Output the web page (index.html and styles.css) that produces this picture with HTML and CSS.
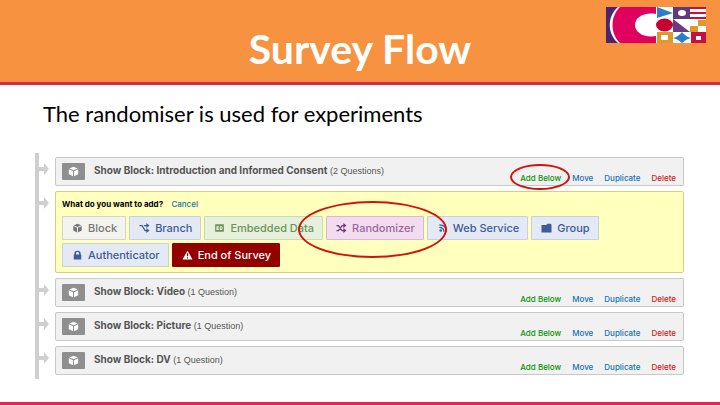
FILE: index.html
```html
<!DOCTYPE html>
<html lang="en">

<head>
    <meta charset="UTF-8">
    <meta name="viewport" content="width=device-width, initial-scale=1.0">
    <title>Survey Flow</title>
    <link rel="stylesheet" href="styles.css">
</head>

<body>
    <svg class="symbols" aria-hidden="true">
        <symbol id="cube" viewBox="0 0 16 16">
            <path d="M8 1 14 3.5 8 6.2 2 3.5Z" />
            <path d="M1.2 4.8 7.3 7.5V15L1.2 12Z" />
            <path d="M14.8 4.8 8.7 7.5V15L14.8 12Z" />
        </symbol>
        <symbol id="arrow" viewBox="0 0 10 12">
            <path d="M0 4H5V0L10 6 5 12V8H0Z" />
        </symbol>
    </svg>

    <header class="header">
        <h1>Survey Flow</h1>
        <svg class="logo" viewBox="0 0 100 36" role="img" aria-label="Logo">
            <rect width="100" height="36" fill="#fff" />
            <rect width="14" height="36" fill="#4d2470" />
            <path d="M12 0C1 9 1 27 12 36H50V0Z" fill="#fff" />
            <path d="M14 0C4 9 4 27 14 36H50V0Z" fill="#e00060" />
            <path d="M50 7C37 5 29 11 29 18S37 31 50 29Z" fill="#fff" />
            <path d="M51 0 67 6 51 11Z" fill="#2a7fc8" />
            <rect x="67" width="17" height="12" fill="#5f3a7c" />
            <ellipse cx="76" cy="6" rx="4" ry="3" fill="#fff" />
            <path d="M84 0H100V2H84ZM84 5H100V7H84ZM84 10H100V12H84Z" fill="#c8103f" />
            <ellipse cx="58.5" cy="18" rx="8.5" ry="6.5" fill="#c8002f" />
            <path d="M67 12 84 25H67Z" fill="#6b3a80" />
            <path d="M92 13H100V19H92ZM84 19H92V25H84Z" fill="#dd9a28" />
            <path d="M51 25H67V36H51ZM55 28V33H62V28Z" fill="#dd9a28" fill-rule="evenodd" />
            <path d="M67 31Q72 30 76 25 80 30 85 31 80 32 76 36 72 32 67 31Z" fill="#2a7fc8" />
            <path d="M85 25H100V36H85ZM90 29V33H95V29Z" fill="#c8103f" fill-rule="evenodd" />
        </svg>
    </header>

    <main class="content">
        <p class="intro">The randomiser is used for experiments</p>

        <ul class="flow">
            <li class="step">
                <svg class="arrow"><use href="#arrow" /></svg>
                <div class="block">
                    <span class="block-icon"><svg><use href="#cube" /></svg></span>
                    <p class="block-name"><b>Show Block: Introduction and Informed Consent</b> (2 Questions)</p>
                    <nav class="actions">
                        <a class="add marked" href="#">Add Below<span class="ring ring-small"></span></a>
                        <a class="move" href="#">Move</a>
                        <a class="duplicate" href="#">Duplicate</a>
                        <a class="delete" href="#">Delete</a>
                    </nav>
                </div>
            </li>
            <li class="step">
                <svg class="arrow"><use href="#arrow" /></svg>
                <div class="picker">
                    <p class="question"><b>What do you want to add?</b> <a href="#">Cancel</a></p>
                    <div class="options">
                        <button class="option gray" type="button">
                            <svg viewBox="0 0 16 16"><use href="#cube" /></svg>Block
                        </button>
                        <button class="option" type="button">
                            <svg viewBox="0 0 16 16"><path class="line" d="M0 4H4L9 12H13M7 4H13" /><path d="M11 0 16 4 11 8ZM11 8 16 12 11 16Z" /></svg>Branch
                        </button>
                        <button class="option green" type="button">
                            <svg viewBox="0 0 16 16"><path d="M1 2H15V14H1ZM3 5V11H7V9.5H5V8.7H7V7.3H5V6.5H7V5ZM8.5 5V11H11Q13 11 13 8T11 5ZM10.2 6.5Q11.5 6.5 11.5 8T10.2 9.5Z" fill-rule="evenodd" /></svg>Embedded Data
                        </button>
                        <button class="option pink marked" type="button">
                            <svg viewBox="0 0 16 16"><path class="line" d="M0 4H3L9 12H13M0 12H3L9 4H13" /><path d="M11 0 16 4 11 8ZM11 8 16 12 11 16Z" /></svg>Randomizer
                            <span class="ring ring-large"></span>
                        </button>
                        <button class="option" type="button">
                            <svg viewBox="0 0 16 16"><circle cx="5" cy="12" r="2" /><path class="line" d="M3 7Q10 7 10 14M3 3Q14 3 14 14" /></svg>Web Service
                        </button>
                        <button class="option" type="button">
                            <svg viewBox="0 0 16 16"><path d="M0 3H8L9 1H15L16 3V15H0Z" /></svg>Group
                        </button>
                        <button class="option" type="button">
                            <svg viewBox="0 0 16 16"><path d="M2 7H3V5Q3 1 8 1T13 5V7H14V15H2ZM5.5 7H10.5V5Q10.5 3 8 3T5.5 5Z" fill-rule="evenodd" /></svg>Authenticator
                        </button>
                        <button class="option red" type="button">
                            <svg viewBox="0 0 16 16"><path d="M8 1 16 15H0ZM7 5V10H9V5ZM7 11.5V13.5H9V11.5Z" fill-rule="evenodd" /></svg>End of Survey
                        </button>
                    </div>
                </div>
            </li>
            <li class="step">
                <svg class="arrow"><use href="#arrow" /></svg>
                <div class="block">
                    <span class="block-icon"><svg><use href="#cube" /></svg></span>
                    <p class="block-name"><b>Show Block: Video</b> (1 Question)</p>
                    <nav class="actions">
                        <a class="add" href="#">Add Below</a>
                        <a class="move" href="#">Move</a>
                        <a class="duplicate" href="#">Duplicate</a>
                        <a class="delete" href="#">Delete</a>
                    </nav>
                </div>
            </li>
            <li class="step">
                <svg class="arrow"><use href="#arrow" /></svg>
                <div class="block">
                    <span class="block-icon"><svg><use href="#cube" /></svg></span>
                    <p class="block-name"><b>Show Block: Picture</b> (1 Question)</p>
                    <nav class="actions">
                        <a class="add" href="#">Add Below</a>
                        <a class="move" href="#">Move</a>
                        <a class="duplicate" href="#">Duplicate</a>
                        <a class="delete" href="#">Delete</a>
                    </nav>
                </div>
            </li>
            <li class="step">
                <svg class="arrow"><use href="#arrow" /></svg>
                <div class="block">
                    <span class="block-icon"><svg><use href="#cube" /></svg></span>
                    <p class="block-name"><b>Show Block: DV</b> (1 Question)</p>
                    <nav class="actions">
                        <a class="add" href="#">Add Below</a>
                        <a class="move" href="#">Move</a>
                        <a class="duplicate" href="#">Duplicate</a>
                        <a class="delete" href="#">Delete</a>
                    </nav>
                </div>
            </li>
        </ul>
    </main>
</body>

</html>
```
FILE: styles.css
```css
* {
    box-sizing: border-box;
}

body {
    display: flex;
    flex-direction: column;
    min-height: 100vh;
    margin: 0;
    background-color: #fff;
    border-bottom: 3px solid #e8205c;
    font-family: Inter, "Liberation Sans", sans-serif;
}

p {
    margin: 0;
}

a {
    text-decoration: none;
}

.symbols {
    display: none;
}

/* Header */
.header {
    display: grid;
    grid-template-columns: 1fr auto 1fr;
    padding: 7px 14px 0;
    height: 85px;
    background-color: #f79240;
    border-bottom: 3px solid #d42a50;
}

h1 {
    grid-column: 2;
    margin: 18px 0 0;
    color: #fff;
    font: bold 41px/48px Lato, sans-serif;
}

.logo {
    justify-self: end;
    width: 100px;
    height: 36px;
}

.content {
    padding: 14px 36px 16px 35px;
}

.intro {
    padding-left: 8px;
    font: 22px/30px Lato, sans-serif;
    color: #000;
}

/* Flow */
.flow {
    display: flex;
    flex-direction: column;
    gap: 5px;
    margin: 24px 0 0;
    padding: 4px 0;
    border-left: 4px solid #cfcfcf;
    list-style: none;
}

.step {
    display: flex;
    align-items: flex-start;
    gap: 6px;
}

.arrow {
    flex: none;
    width: 10px;
    height: 12px;
    margin-top: 6px;
    fill: #cfcfcf;
}

.block {
    display: flex;
    flex: 1;
    height: 29px;
    padding: 5px 7px 0 6px;
    background-color: #f1f1f1;
    border: 1px solid #c8c8c8;
    border-radius: 2px;
}

.block-icon {
    display: flex;
    align-items: center;
    justify-content: center;
    width: 23px;
    height: 17px;
    margin-right: 9px;
    background-color: #8f8f8f;
    border-radius: 1px;
}

.block-icon svg {
    width: 11px;
    height: 11px;
    fill: #fff;
}

.block-name {
    flex: 1;
    color: #555;
    font: 9px/14px "Liberation Sans", sans-serif;
}

.block-name b {
    font-family: Inter, "Liberation Sans", sans-serif;
    font-size: 10px;
}

.actions {
    display: flex;
    gap: 11px;
    padding-top: 9px;
    font-size: 8px;
    font-weight: 500;
    line-height: 12px;
}

.marked {
    position: relative;
}

.add {
    color: #0a930a;
}

.move,
.duplicate {
    color: #1573b8;
}

.delete {
    color: #d22020;
}

/* Add menu */
.picker {
    flex: 1;
    padding: 5px 6px;
    background-color: #ffffbe;
    border: 1px solid #d8cf80;
    border-radius: 2px;
}

.question {
    color: #000;
    font-size: 8px;
    line-height: 14px;
}

.question a {
    margin-left: 6px;
    color: #1573a8;
    font-weight: 500;
}

.options {
    display: flex;
    flex-wrap: wrap;
    gap: 3px;
    margin-top: 5px;
    padding-right: 60px;
}

.option {
    display: flex;
    align-items: center;
    gap: 5px;
    height: 24px;
    padding: 0 8px 0 9px;
    background-color: #e3e9f5;
    border: 1px solid #c8d0dc;
    border-radius: 1px;
    color: #3f5b98;
    font: 500 11px/14px Inter, "Liberation Sans", sans-serif;
    white-space: nowrap;
}

.option svg {
    width: 11px;
    height: 10px;
    fill: currentColor;
}

.option .line {
    fill: none;
    stroke: currentColor;
    stroke-width: 2;
}

.gray {
    background-color: #f3f3f0;
    border-color: #d4d4cc;
    color: #777;
}

.green {
    background-color: #e6f1dc;
    border-color: #c8d8b8;
    color: #6f9358;
}

.pink {
    background-color: #f3dcf0;
    border-color: #d8b8d4;
    color: #966a9c;
}

.pink svg {
    color: #6a3a78;
}

.red {
    background-color: #930000;
    border-color: #930000;
    color: #fff;
}

/* Red rings drawn over the controls */
.ring {
    position: absolute;
    border: 2px solid #d0140c;
    border-radius: 50%;
    pointer-events: none;
}

.ring-small {
    inset: -8px -9px -5px -10px;
}

.ring-large {
    inset: -16px -24px -19px -29px;
}
```
